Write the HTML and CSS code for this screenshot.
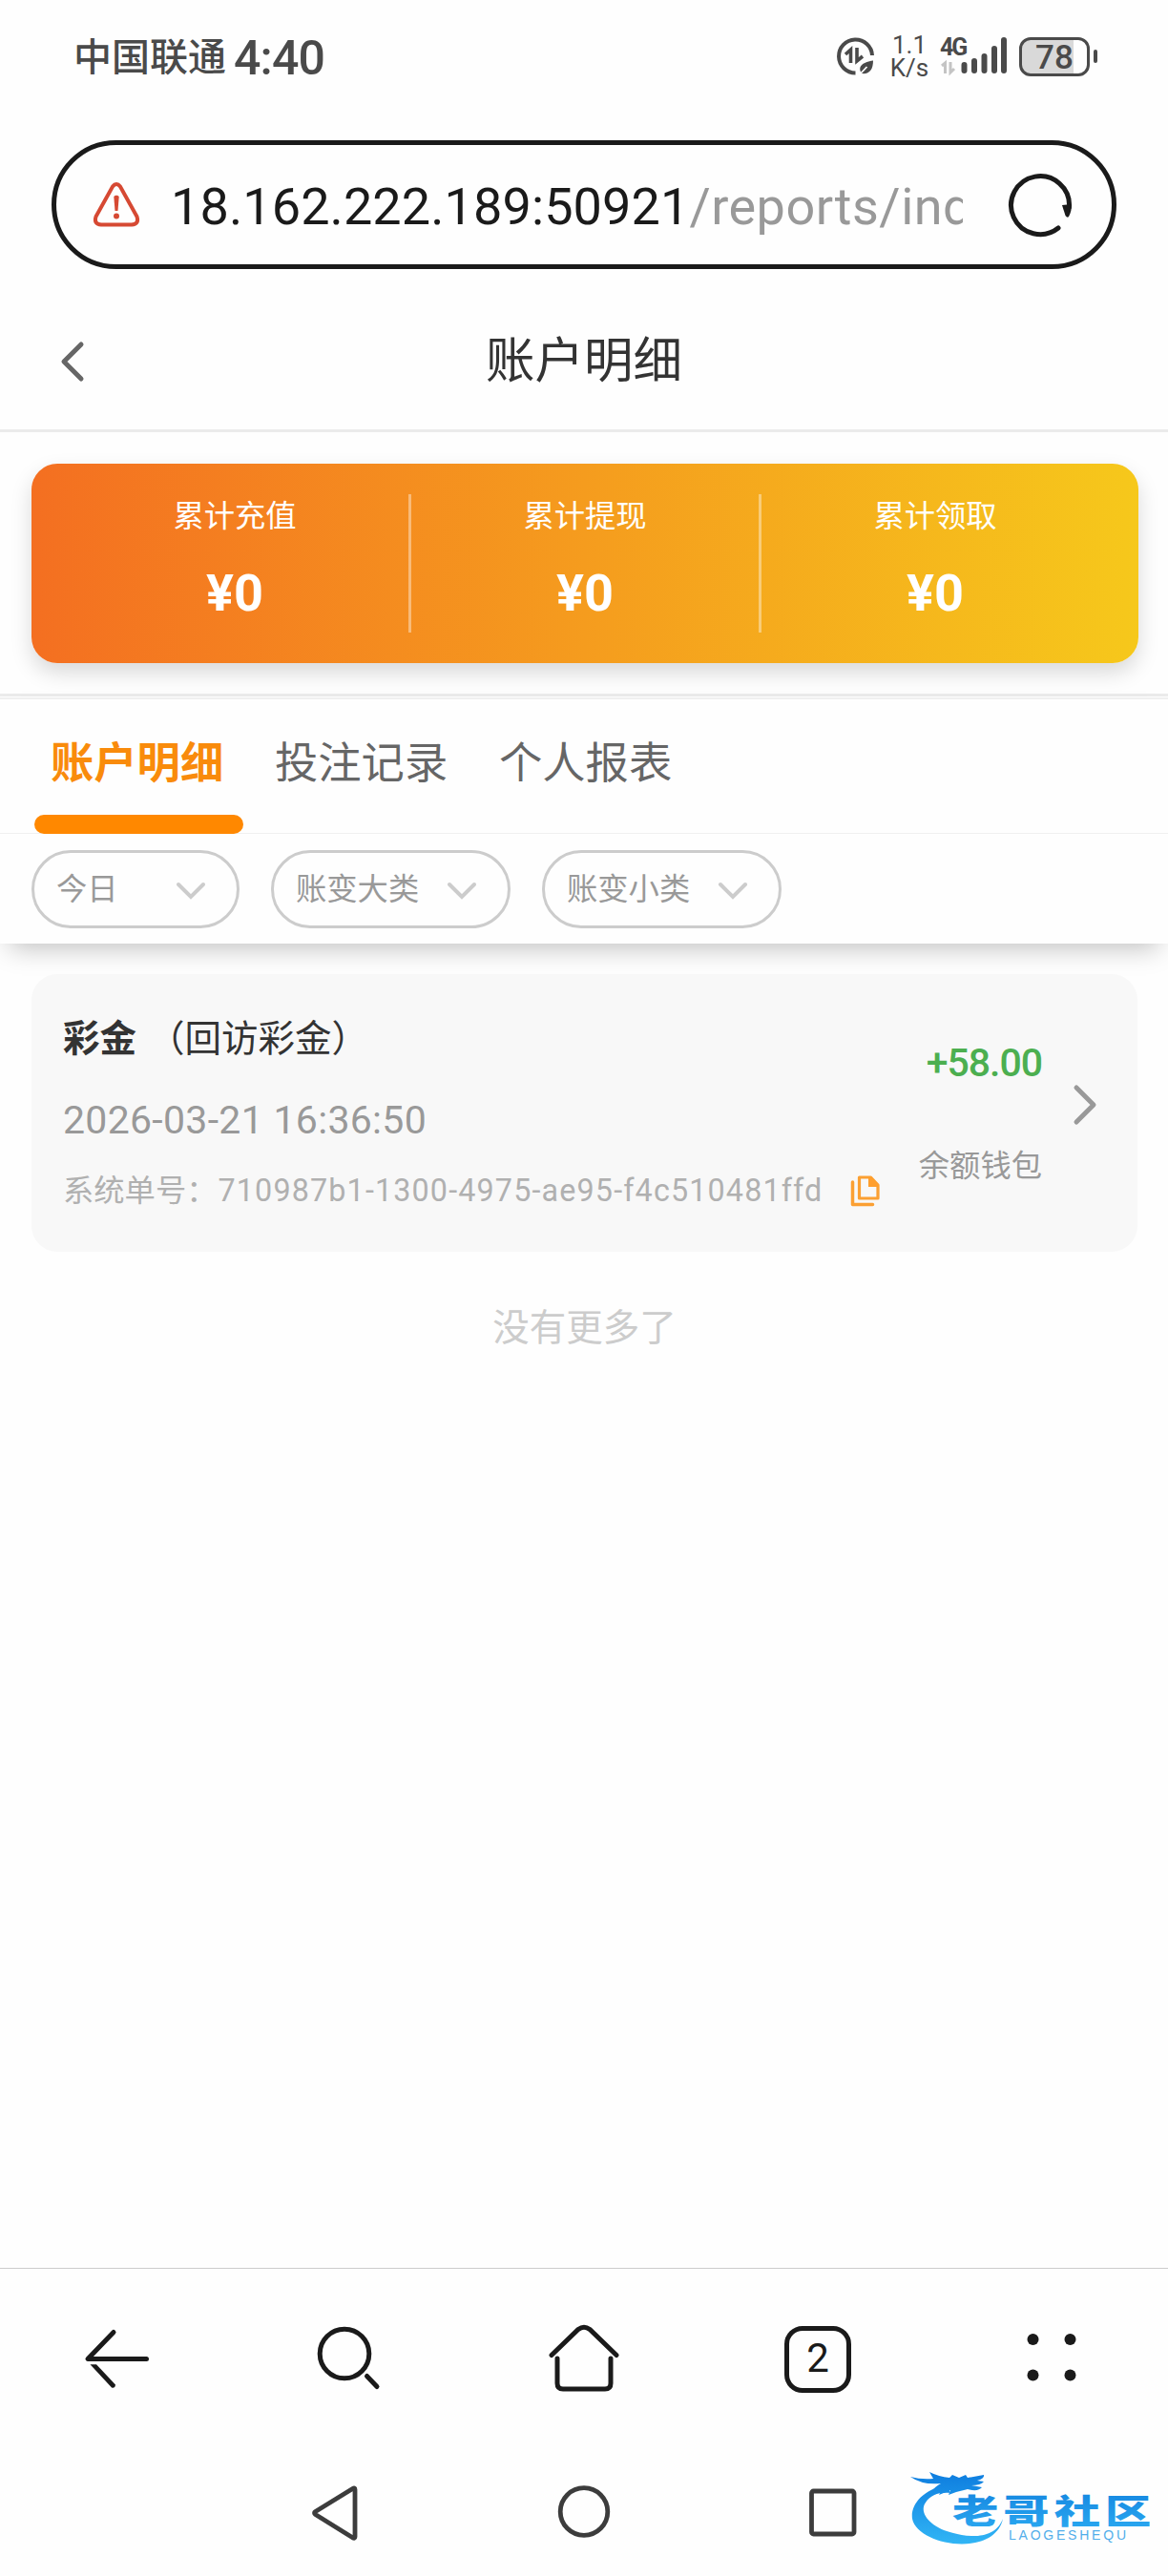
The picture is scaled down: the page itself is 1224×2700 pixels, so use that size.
FILE: index.html
```html
<!DOCTYPE html>
<html lang="zh-CN">
<head>
    <meta charset="UTF-8">
    <meta name="viewport" content="width=device-width, initial-scale=1.0">
    <title>账户明细</title>
    <link rel="stylesheet" href="styles.css">
</head>
<body>

    <!-- Status bar -->
    <div class="status-bar">
        <div class="status-left">
            <span class="carrier">中国联通</span>
            <span class="clock">4:40</span>
        </div>
        <div class="status-right">
            <svg class="data-icon" width="42" height="42" viewBox="0 0 42 42">
                <path d="M39 20 A17.500 17.500 0 1 0 21.500 38.500" fill="none" stroke="#4a4a4a" stroke-width="4"/>
                <path d="M11 19 L16.500 14 V28 M23 12 V26 L29 21" fill="none" stroke="#4a4a4a" stroke-width="3.600"/>
                <path d="M40 25.500 C40 35 36 40 28 39 C23 32 29 27 40 25.500 Z" fill="#4a4a4a"/>
                <path d="M25 41 L33.500 32" stroke="#fff" stroke-width="1.800"/>
            </svg>
            <div class="speed"><span>1.1</span><span>K/s</span></div>
            <div class="signal">
                <span class="network">4G</span>
                <svg width="70" height="42" viewBox="0 0 70 42">
                    <path d="M2 31 L5.500 28 V39 M11 27 V38 L15 34" fill="none" stroke="#c4c4c4" stroke-width="3"/>
                    <path d="M25.500 30 V36 M36 26 V36 M46.500 21 V36 M57 13 V36 M67 4 V36" stroke="#4a4a4a" stroke-width="6" stroke-linecap="round"/>
                </svg>
            </div>
            <div class="battery"><span>78</span></div>
            <div class="battery-cap"></div>
        </div>
    </div>

    <!-- Address bar -->
    <div class="address-bar">
        <svg width="50" height="48" viewBox="0 0 50 48">
            <path d="M21 4.500 Q25 -0.500 29 4.500 L46.500 36 Q49 44 41 44.500 H9 Q1 44 3.500 36 Z" fill="none" stroke="#d64933" stroke-width="4"/>
            <path d="M22.300 15 Q25 12.500 27.700 15 L26.500 30 H23.500 Z" fill="#d64933"/>
            <circle cx="25" cy="35.500" r="3" fill="#d64933"/>
        </svg>
        <div class="url">18.162.222.189:50921<span>/reports/index</span></div>
        <svg class="reload" width="72" height="72" viewBox="0 0 72 72">
            <path d="M55 60 A30.500 30.500 0 1 1 66.500 38" fill="none" stroke="#1a1a1a" stroke-width="5" stroke-linecap="round"/>
            <path d="M59 36 L69 35 Q69 43 66 48 Q64.500 50 62.500 47 Z" fill="#1a1a1a"/>
        </svg>
    </div>

    <!-- Page header -->
    <div class="header">
        <svg width="28" height="44" viewBox="0 0 28 44">
            <path d="M23 4 L5 22 L23 40" fill="none" stroke="#666" stroke-width="5" stroke-linecap="round" stroke-linejoin="round"/>
        </svg>
        <h1>账户明细</h1>
    </div>

    <!-- Totals -->
    <div class="summary-wrap">
        <div class="summary">
            <div class="total"><p>累计充值</p><strong>¥0</strong></div>
            <div class="total"><p>累计提现</p><strong>¥0</strong></div>
            <div class="total"><p>累计领取</p><strong>¥0</strong></div>
        </div>
    </div>

    <div class="panel">
        <div class="tabs">
            <div class="tab active">账户明细</div>
            <div class="tab">投注记录</div>
            <div class="tab">个人报表</div>
        </div>
        <div class="filters">
            <div class="filter day">今日
                <svg width="34" height="20" viewBox="0 0 34 20"><path d="M4 4 L17 17 L30 4" fill="none" stroke="#ccc" stroke-width="4" stroke-linecap="round"/></svg>
            </div>
            <div class="filter">账变大类
                <svg width="34" height="20" viewBox="0 0 34 20"><path d="M4 4 L17 17 L30 4" fill="none" stroke="#ccc" stroke-width="4" stroke-linecap="round"/></svg>
            </div>
            <div class="filter">账变小类
                <svg width="34" height="20" viewBox="0 0 34 20"><path d="M4 4 L17 17 L30 4" fill="none" stroke="#ccc" stroke-width="4" stroke-linecap="round"/></svg>
            </div>
        </div>
    </div>

    <!-- Records -->
    <div class="records">
        <div class="record">
            <div class="record-info">
                <div class="record-title"><b>彩金</b><span>（回访彩金）</span></div>
                <div class="record-date">2026-03-21 16:36:50</div>
                <div class="record-no">
                    <span>系统单号：</span><span class="uuid">710987b1-1300-4975-ae95-f4c510481ffd</span>
                    <svg width="32" height="34" viewBox="0 0 32 34">
                        <path d="M2.500 8 V31.500 H23.500" fill="none" stroke="#fba033" stroke-width="3.500" stroke-linecap="round" stroke-linejoin="round"/>
                        <path d="M9.500 3 H21.500 L29 11 V25 H9.500 Z" fill="none" stroke="#fba033" stroke-width="3.200" stroke-linejoin="round"/>
                        <path d="M19 2 H22 L30 11 V13 H19 Z" fill="#ff9f2e"/>
                    </svg>
                </div>
            </div>
            <div class="record-amount">
                <span class="amount">+58.00</span>
                <span class="wallet">余额钱包</span>
            </div>
            <svg class="arrow" width="28" height="46" viewBox="0 0 28 46">
                <path d="M5 5 L23 23 L5 41" fill="none" stroke="#999" stroke-width="5" stroke-linecap="round" stroke-linejoin="round"/>
            </svg>
        </div>
        <div class="no-more">没有更多了</div>
    </div>

    <!-- Browser toolbar -->
    <div class="toolbar">
        <svg width="76" height="76" viewBox="0 0 76 76"><path d="M35 9.500 L8 37.500 H69.500" fill="none" stroke="#1a1a1a" stroke-width="5" stroke-linecap="round" stroke-linejoin="round"/><path d="M10.500 43.300 H17 L37 64.500 Q36.500 68.500 33 67.500 Z" fill="#1a1a1a"/></svg>
        <svg width="76" height="76" viewBox="0 0 76 76"><circle cx="32" cy="32" r="25.800" fill="none" stroke="#1a1a1a" stroke-width="5"/><path d="M55.500 55.500 L66 66.500" stroke="#1a1a1a" stroke-width="5" stroke-linecap="round"/></svg>
        <svg width="76" height="76" viewBox="0 0 76 76"><path d="M4 33.500 L32 6.500 Q38 2 44 6.500 L72 33.500 M10 37 V63 Q10 69 16 69 H60 Q66 69 66 63 V37" fill="none" stroke="#1a1a1a" stroke-width="5" stroke-linecap="round"/></svg>
        <div class="tab-count">2</div>
        <svg width="76" height="76" viewBox="0 0 76 76"><g fill="#1a1a1a"><circle cx="18.500" cy="17" r="6"/><circle cx="57.500" cy="17" r="6"/><circle cx="18.500" cy="54.500" r="6"/><circle cx="57.500" cy="54.500" r="6"/></g></svg>
    </div>

    <!-- System navigation -->
    <div class="nav-bar">
        <svg width="60" height="60" viewBox="0 0 60 60"><path d="M51 5.500 V55 Q51 57 48.500 55.800 L9.500 31.500 Q7.500 30 9.500 28.500 L48.500 4.500 Q51 3 51 5.500 Z" fill="none" stroke="#3c3c3c" stroke-width="4.800" stroke-linejoin="round"/></svg>
        <svg width="60" height="60" viewBox="0 0 60 60"><circle cx="30" cy="28.500" r="24.800" fill="none" stroke="#3c3c3c" stroke-width="4.800"/></svg>
        <svg width="60" height="60" viewBox="0 0 60 60"><rect x="7.500" y="7" width="44.500" height="45" rx="2" fill="none" stroke="#3c3c3c" stroke-width="4.800"/></svg>
    </div>

    <svg class="watermark" width="260" height="90" viewBox="0 0 260 90">
        <defs>
            <linearGradient id="blue" gradientUnits="userSpaceOnUse" x1="0" y1="8" x2="0" y2="84">
                <stop offset="0" stop-color="#0f7fe0"/>
                <stop offset="1" stop-color="#33b8f6"/>
            </linearGradient>
            <linearGradient id="blueText" x1="0" y1="0" x2="0" y2="1">
                <stop offset="0" stop-color="#1282de"/>
                <stop offset="1" stop-color="#2cabf2"/>
            </linearGradient>
        </defs>
        <g fill="url(#blue)">
            <path d="M40 18 C14 24 2 40 4 54 C10 83 90 95 99 54 C90 77 62 73 47 69 C24 64 10 48 18 37 C23 29 32 26 44 27 Z"/>
            <path d="M2 10 Q13 13 26 12 L22 5 Q32 10 43 11 L46 8 L53 11 L60 8 L62 11 L79 8 Q80 12 72 14 L79 15 Q76 19 66 19 L77 21 Q73 26 62 23 L50 26 L42 29 L44 24 L32 29 L35 23 L24 26 Q28 20 34 17 Q15 19 2 10 Z"/>
        </g>
        <text class="mark-cn" fill="url(#blueText)" transform="translate(46 59) scale(1.38 1)" x="0" y="0" textLength="151" lengthAdjust="spacing">老哥社区</text>
        <text class="mark-en" x="105" y="76" textLength="123" lengthAdjust="spacing">LAOGESHEQU</text>
    </svg>

</body>
</html>
```
FILE: styles.css
```css
* {
    margin: 0;
    padding: 0;
    box-sizing: border-box;
}
body {
    width: 1224px;
    height: 2700px;
    display: flex;
    flex-direction: column;
    position: relative;
    overflow: hidden;
    background: #fefefe;
    font-family: Roboto, "Noto Sans CJK SC", sans-serif;
    color: #333;
}
svg {
    display: block;
    flex-shrink: 0;
}
/* Status bar */
.status-bar {
    height: 147px;
    padding: 38px 74px 0 77px;
    display: flex;
    justify-content: space-between;
    align-items: flex-start;
    color: #4a4a4a;
}
.status-left, .status-right {
    display: flex;
    height: 42px;
    align-items: center;
}
.status-left {
    margin-top: 2px;
}
.carrier {
    font-size: 40px;
    line-height: 42px;
    font-weight: 500;
}
.clock {
    font-size: 50px;
    line-height: 42px;
    margin-left: 8px;
    letter-spacing: -0.8px;
    font-weight: 500;
}
.data-icon {
    margin-right: 16px;
}
.speed {
    width: 40px;
    display: flex;
    flex-direction: column;
    align-items: center;
    font-size: 26px;
    line-height: 24px;
}
.signal {
    width: 70px;
    margin-left: 12px;
    position: relative;
}
.network {
    position: absolute;
    left: 0;
    top: 0;
    font-size: 25px;
    line-height: 24px;
    font-weight: 700;
    letter-spacing: -2px;
}
.battery {
    width: 74px;
    height: 41px;
    margin-left: 13px;
    border: 3px solid #4a4a4a;
    border-radius: 12px;
    background: linear-gradient(90deg, #d9d9d9 54px, #fefefe 54px);
    font-size: 35px;
    line-height: 37px;
    font-weight: 500;
    padding-left: 14px;
}
.battery-cap {
    width: 4px;
    height: 14px;
    margin-left: 4px;
    border-radius: 2px;
    background: #4a4a4a;
}
/* Address bar */
.address-bar {
    height: 135px;
    margin: 0 54px;
    padding: 0 38px;
    border: 5px solid #1a1a1a;
    border-radius: 68px;
    display: flex;
    align-items: center;
}
.url {
    width: 830px;
    margin-left: 32px;
    padding-top: 4px;
    overflow: hidden;
    white-space: nowrap;
    font-size: 54px;
    line-height: 80px;
    letter-spacing: 0.1px;
    color: #1a1a1a;
}
.url span {
    letter-spacing: 0.5px;
    color: #999;
}
.reload {
    margin-left: 45px;
}
/* Page header */
.header {
    height: 171px;
    padding: 25px 62px 0;
    border-bottom: 3px solid #ebebeb;
    display: flex;
    align-items: center;
    justify-content: space-between;
}
.header::after {
    content: "";
    width: 28px;
}
.header h1 {
    font-size: 51.5px;
    line-height: 70px;
    font-weight: 400;
}
/* Totals */
.summary-wrap {
    height: 277px;
    padding: 33px 31px 0 33px;
    border-bottom: 3px solid #ebebeb;
}
.summary {
    height: 209px;
    padding: 32px 31px;
    display: flex;
    border-radius: 27px;
    background: linear-gradient(90deg, #f46f21, #f59c1e 50%, #f6c81b);
    box-shadow: 0 10px 22px rgba(0, 0, 0, 0.15);
    color: #fff;
    text-align: center;
}
.total {
    flex: 1;
    border-right: 3px solid rgba(255, 255, 255, 0.4);
}
.total:last-child {
    border-right: none;
}
.total p {
    font-size: 32.3px;
    line-height: 47px;
}
.total strong {
    display: block;
    margin-top: 27px;
    font-size: 54px;
    line-height: 60px;
    font-weight: 700;
}
/* Tabs and filters */
.panel {
    height: 259px;
    background: #fefefe;
    border-top: 1px solid #fefefe;
    box-shadow: 0 14px 26px -10px rgba(0, 0, 0, 0.26);
}
.tabs {
    height: 143px;
    padding-left: 36px;
    border-top: 2px solid #f0f0f0;
    border-bottom: 1px solid #f0f0f0;
    display: flex;
    gap: 16px;
}
.tab {
    width: 219px;
    height: 141px;
    padding: 35px 0 0 17px;
    font-size: 45.3px;
    line-height: 66px;
    color: #666;
}
.tab.active {
    color: #f98b0b;
    font-weight: 600;
}
.tab.active::after {
    content: "";
    display: block;
    height: 20px;
    margin: 20px 0 0 -17px;
    border-radius: 10px;
    background: #ff8800;
}
.filters {
    display: flex;
    gap: 33px;
    padding: 17px 33px;
}
.filter {
    width: 251px;
    height: 82px;
    padding: 0 31px 7px 23px;
    border: 3px solid #ccc;
    border-radius: 41px;
    display: flex;
    align-items: center;
    justify-content: space-between;
    font-size: 32.3px;
    color: #999;
}
.filter.day {
    width: 218px;
}
.filter svg {
    margin-top: 8px;
}
/* Records */
.records {
    flex: 1;
    padding: 32px 32px 0 33px;
}
.record {
    height: 291px;
    padding: 0 41px 0 33px;
    border-radius: 27px;
    background: #f8f8f8;
    display: flex;
}
.record-info {
    width: 860px;
    padding-top: 40px;
}
.record-title {
    display: flex;
    gap: 12px;
    font-size: 38.5px;
    line-height: 56px;
}
.record-date {
    margin-top: 27px;
    font-size: 41px;
    line-height: 60px;
    letter-spacing: 0.3px;
    color: #999;
}
.record-no {
    margin-top: 20px;
    display: flex;
    align-items: center;
    font-size: 32.3px;
    line-height: 48px;
    color: #b0b0b0;
}
.uuid {
    width: 663px;
    padding-left: 1px;
    letter-spacing: 1.15px;
}
.record-amount {
    flex: 1;
    display: flex;
    flex-direction: column;
    align-items: flex-end;
    padding: 63px 31px 0 0;
}
.amount {
    font-size: 41px;
    line-height: 60px;
    font-weight: 500;
    letter-spacing: -1px;
    color: #4caf50;
    white-space: nowrap;
}
.wallet {
    margin-top: 54px;
    font-size: 32.3px;
    line-height: 48px;
    color: #999;
    white-space: nowrap;
}
.arrow {
    margin-top: 114px;
}
.no-more {
    margin-top: 51px;
    text-align: center;
    font-size: 38.5px;
    line-height: 58px;
    color: #ccc;
}
/* Browser toolbar */
.toolbar {
    height: 191px;
    padding: 57px 84px 0;
    border-top: 1px solid #ccc;
    display: flex;
    justify-content: space-between;
}
.tab-count {
    width: 70px;
    height: 70px;
    margin: 3px 3px 0;
    border: 5px solid #1a1a1a;
    border-radius: 19px;
    text-align: center;
    font-size: 42px;
    line-height: 58px;
    color: #1a1a1a;
}
/* System navigation */
.nav-bar {
    height: 132px;
    padding: 36px 321px 0;
    display: flex;
    justify-content: space-between;
}
.watermark {
    position: absolute;
    left: 952px;
    top: 2586px;
}
.mark-cn {
    font-family: "Noto Sans CJK SC", sans-serif;
    font-size: 35px;
    font-weight: 900;
}
.mark-en {
    font-family: "Liberation Sans", sans-serif;
    font-size: 14px;
    fill: #52aeea;
}
```
